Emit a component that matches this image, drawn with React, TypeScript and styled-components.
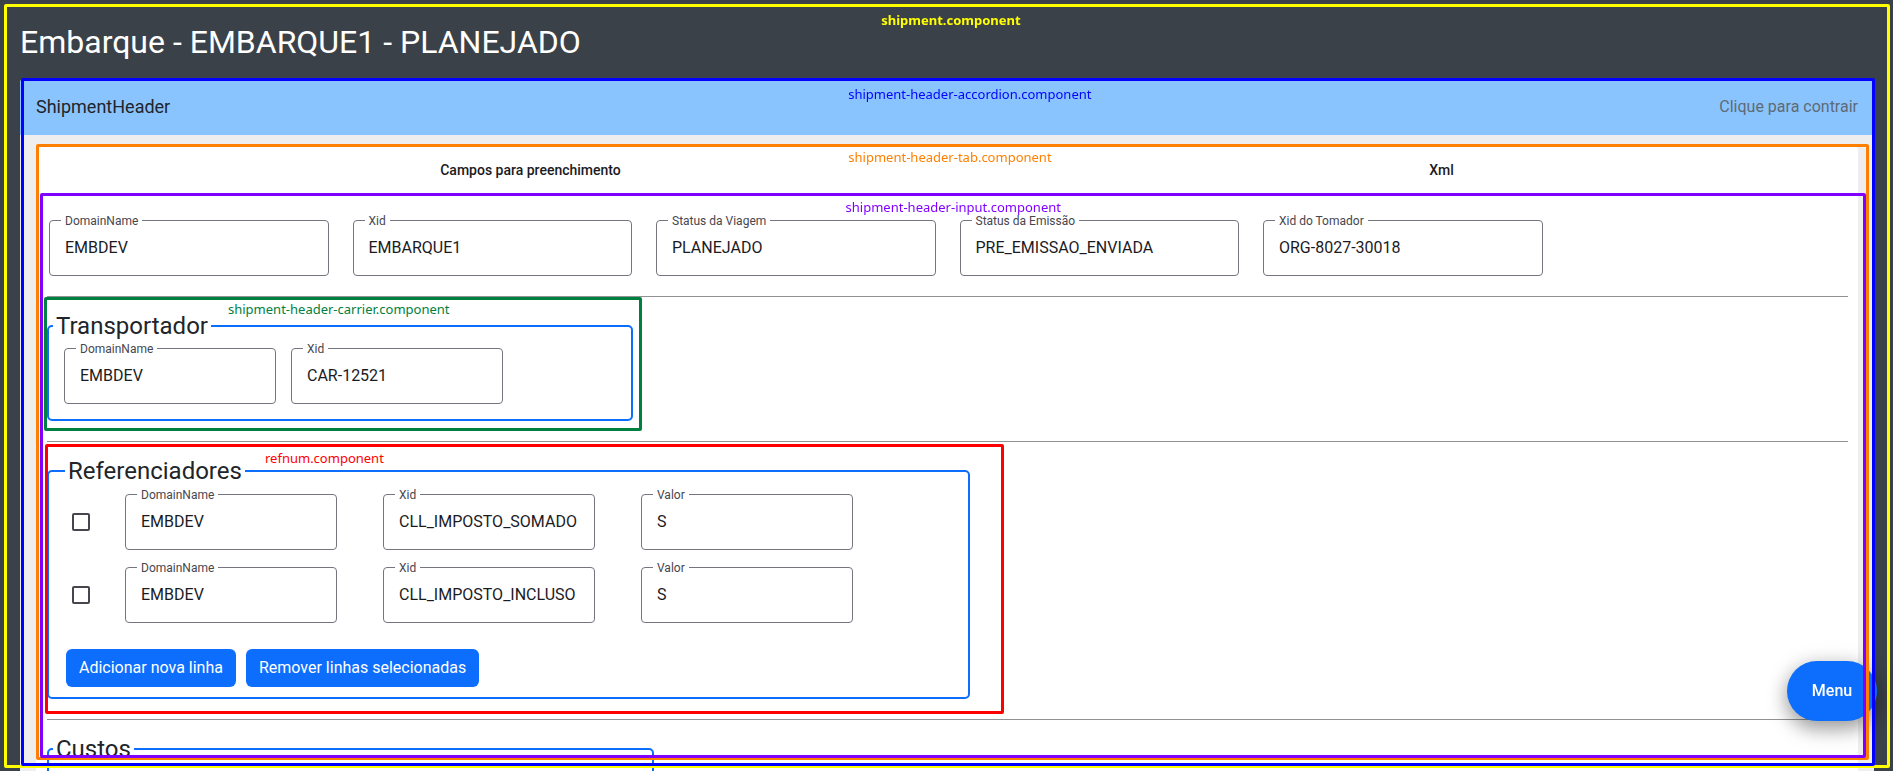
import React, { useId } from 'react';
import styled, { createGlobalStyle } from 'styled-components';

const GlobalStyle = createGlobalStyle`
  * { box-sizing: border-box; }
  body {
    margin: 0;
    background: #3b4148;
    color: #212529;
    font: 400 16px/24px Roboto, "Liberation Sans", sans-serif;
  }
`;

const Page = styled.main`
  position: relative;
  height: 100vh;
  overflow: hidden;
  padding: 0 19px 0 20px;
`;

const Title = styled.h1`
  margin: 0;
  padding: 22px 0 17px;
  color: #fff;
  font-size: 32px;
  font-weight: 400;
  line-height: 40px;
`;

const Accordion = styled.section`
  background: #eee;
  border-radius: 4px 4px 0 0;
`;

const AccordionHeader = styled.button`
  display: flex;
  align-items: center;
  justify-content: space-between;
  width: 100%;
  height: 56px;
  padding: 0 16px;
  border: 0;
  border-radius: 4px 4px 0 0;
  background: #8ac4ff;
  color: #212529;
  font: inherit;
  font-size: 18px;
`;

const Hint = styled.span`
  color: #5f6a75;
  font-size: 16px;
`;

const AccordionBody = styled.div`
  padding: 11px 16px 0;
`;

const Card = styled.div`
  border-radius: 4px;
  background: #fff;
`;

const Tabs = styled.div`
  display: flex;
  height: 48px;
`;

const Tab = styled.button`
  flex: 1 1 auto;
  padding: 0 24px;
  border: 0;
  background: none;
  color: #1b1b1f;
  font: 500 14px/20px Roboto, "Liberation Sans", sans-serif;
`;

const TabPanel = styled.div`
  padding: 26px 10px 60px 11px;
`;

const FieldGrid = styled.div`
  display: grid;
  grid-template-columns: repeat(6, 1fr);
  gap: 24px;
  padding: 0 2px 20px;
`;

const FieldBox = styled.div`
  position: relative;
  min-width: 0;
`;

const FieldInput = styled.input`
  display: block;
  width: 100%;
  height: 56px;
  padding: 0 15px 2px;
  border: 1px solid #74757f;
  border-radius: 4px;
  background: transparent;
  color: #1b1b1f;
  font: inherit;
`;

const FieldLabel = styled.label`
  position: absolute;
  top: -7px;
  left: 12px;
  padding: 0 4px;
  background: #fff;
  color: #46464f;
  font-size: 12px;
  line-height: 16px;
`;

const Divider = styled.hr`
  height: 1px;
  margin: 0;
  border: 0;
  background: #909294;
`;

const Section = styled.section<{ $width: number }>`
  position: relative;
  width: ${(p) => p.$width}px;
  max-width: 100%;
  padding: 13px 0 20px;
`;

const Group = styled.fieldset<{ $indent: number; $bottom: number }>`
  margin: 0;
  min-width: 0;
  padding: 0 15px ${(p) => p.$bottom}px;
  border: 2px solid #0d6efd;
  border-radius: 5px;

  > legend {
    margin-left: ${(p) => p.$indent - 15}px;
    padding: 0 3px;
    font-size: 24px;
    line-height: 32px;
  }
`;

const GroupRow = styled.div<{ $top: number }>`
  display: flex;
  gap: 15px;
  padding-top: ${(p) => p.$top}px;

  > div { width: 212px; }
`;

const RefRow = styled.div`
  display: flex;
  align-items: center;
  gap: 35px;
  padding: 7px 0 10px 8px;
`;

const RefFields = styled.div`
  display: flex;
  gap: 46px;

  > div { width: 212px; }
`;

const Checkbox = styled.input`
  appearance: none;
  width: 18px;
  height: 18px;
  margin: 0;
  border: 2px solid #46464f;
  border-radius: 2px;
  background: #fff;

  &:checked { background: #0d6efd; }
`;

const Actions = styled.div`
  display: flex;
  gap: 10px;
  padding: 16px 0 0 2px;
`;

const Button = styled.button`
  height: 38px;
  padding: 0 13px;
  border: 0;
  border-radius: 6px;
  background: #0d6efd;
  color: #fff;
  font: inherit;
`;

const MenuButton = styled.button`
  position: fixed;
  right: 16px;
  bottom: 50px;
  width: 90px;
  height: 60px;
  border: 0;
  border-radius: 30px;
  background: #0d6efd;
  box-shadow: 0 8px 20px rgba(0, 0, 0, 0.35), 0 2px 24px rgba(0, 0, 0, 0.12);
  color: #fff;
  font: 500 16px/24px Roboto, "Liberation Sans", sans-serif;
`;

const Overlay = styled.div`
  position: fixed;
  inset: 0;
  pointer-events: none;
`;

const Outline = styled.div<{ $color: string; $inset: string; $bold?: boolean; $labelTop: number; $labelLeft: string }>`
  position: absolute;
  inset: ${(p) => p.$inset};
  border: 3px solid ${(p) => p.$color};
  border-radius: 2px;
  color: ${(p) => p.$color};
  pointer-events: none;

  > span {
    position: absolute;
    top: ${(p) => p.$labelTop}px;
    left: ${(p) => p.$labelLeft};
    white-space: nowrap;
    font: ${(p) => (p.$bold ? 700 : 400)} 13px/16px "Noto Sans", "Open Sans", sans-serif;
  }
`;

function Field({ label, value }: { label: string; value: string }) {
  const id = useId();
  return (
    <FieldBox>
      <FieldInput id={id} type="text" defaultValue={value} />
      <FieldLabel htmlFor={id}>{label}</FieldLabel>
    </FieldBox>
  );
}

const shipmentFields = [
  ['DomainName', 'EMBDEV'],
  ['Xid', 'EMBARQUE1'],
  ['Status da Viagem', 'PLANEJADO'],
  ['Status da Emissão', 'PRE_EMISSAO_ENVIADA'],
  ['Xid do Tomador', 'ORG-8027-30018'],
];

const refnums = [
  { domain: 'EMBDEV', xid: 'CLL_IMPOSTO_SOMADO', value: 'S' },
  { domain: 'EMBDEV', xid: 'CLL_IMPOSTO_INCLUSO', value: 'S' },
];

export default function App() {
  return (
    <>
      <GlobalStyle />
      <Page>
        <Title>Embarque - EMBARQUE1 - PLANEJADO</Title>
        <Accordion>
          <AccordionHeader type="button" aria-expanded="true">
            ShipmentHeader
            <Hint>Clique para contrair</Hint>
          </AccordionHeader>
          <AccordionBody>
            <Card>
              <Tabs role="tablist">
                <Tab type="button" role="tab" aria-selected="true">Campos para preenchimento</Tab>
                <Tab type="button" role="tab" aria-selected="false">Xml</Tab>
              </Tabs>
              <TabPanel role="tabpanel">
                <FieldGrid>
                  {shipmentFields.map(([label, value]) => (
                    <Field key={label} label={label} value={value} />
                  ))}
                </FieldGrid>
                <Divider />
                <Section $width={586}>
                  <Group $indent={4} $bottom={15}>
                    <legend>Transportador</legend>
                    <GroupRow $top={6}>
                      <Field label="DomainName" value="EMBDEV" />
                      <Field label="Xid" value="CAR-12521" />
                    </GroupRow>
                  </Group>
                  <Outline $color="#008040" $inset="0 -9px 10px -3px" $labelTop={1} $labelLeft="181px">
                    <span>shipment-header-carrier.component</span>
                  </Outline>
                </Section>
                <Divider />
                <Section $width={923}>
                  <Group $indent={16} $bottom={10}>
                    <legend>Referenciadores</legend>
                    {refnums.map((row) => (
                      <RefRow key={row.xid}>
                        <Checkbox type="checkbox" aria-label={`Selecionar ${row.xid}`} />
                        <RefFields>
                          <Field label="DomainName" value={row.domain} />
                          <Field label="Xid" value={row.xid} />
                          <Field label="Valor" value={row.value} />
                        </RefFields>
                      </RefRow>
                    ))}
                    <Actions>
                      <Button type="button">Adicionar nova linha</Button>
                      <Button type="button">Remover linhas selecionadas</Button>
                    </Actions>
                  </Group>
                  <Outline $color="#ff0000" $inset="2px -34px 5px -2px" $labelTop={3} $labelLeft="217px">
                    <span>refnum.component</span>
                  </Outline>
                </Section>
                <Divider />
                <Section $width={607}>
                  <Group $indent={4} $bottom={60}>
                    <legend>Custos</legend>
                  </Group>
                </Section>
              </TabPanel>
            </Card>
          </AccordionBody>
        </Accordion>
        <MenuButton type="button">Menu</MenuButton>
      </Page>
      <Overlay>
        <Outline $color="#ffff00" $inset="4px 3px 3px 4px" $labelTop={5} $labelLeft="46.5%" $bold>
          <span>shipment.component</span>
        </Outline>
        <Outline $color="#0000ff" $inset="78px 18px 5px 21px" $labelTop={5} $labelLeft="44.6%">
          <span>shipment-header-accordion.component</span>
        </Outline>
        <Outline $color="#ff8000" $inset="144px 24px 11px 36px" $labelTop={2} $labelLeft="44.3%">
          <span>shipment-header-tab.component</span>
        </Outline>
        <Outline $color="#8000ff" $inset="193px 27px 13px 40px" $labelTop={3} $labelLeft="44.1%">
          <span>shipment-header-input.component</span>
        </Outline>
      </Overlay>
    </>
  );
}
